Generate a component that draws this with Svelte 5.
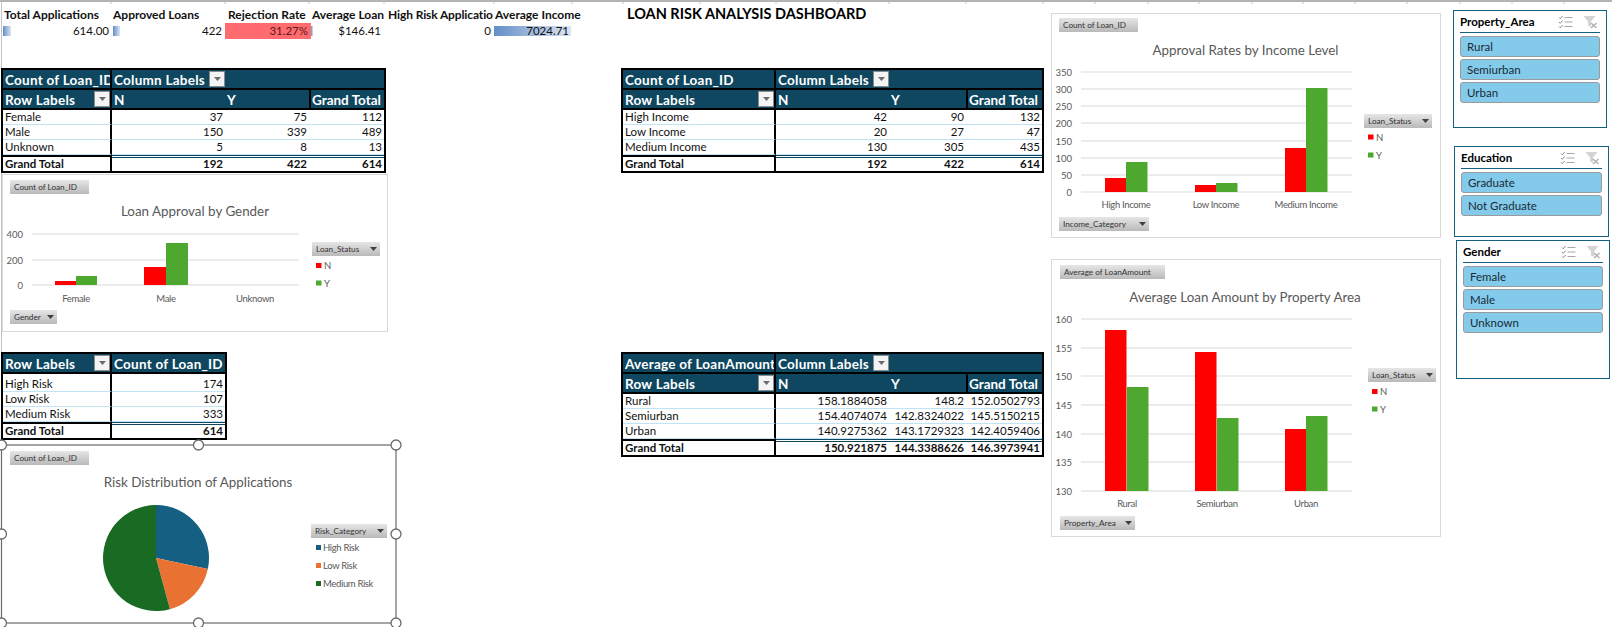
<script>
  const kpis = [
    { label: 'Total Applications', value: '614.00', bar: 8, off: 0 },
    { label: 'Approved Loans', value: '422', bar: 7, off: 1 },
    { label: 'Rejection Rate', value: '31.27%', bar: 0, off: 0, alert: true },
    { label: 'Average Loan', value: '$146.41', bar: 2, off: 0 },
    { label: 'High Risk Applicatio', value: '0', bar: 0, off: 0 },
    { label: 'Average Income', value: '7024.71', bar: 77, off: 0 }
  ];

  const genderPivot = {
    cls: 'pv-gender',
    corner: 'Count of Loan_ID',
    rows: [
      ['Female', '37', '75', '112'],
      ['Male', '150', '339', '489'],
      ['Unknown', '5', '8', '13']
    ],
    total: ['Grand Total', '192', '422', '614']
  };
  const incomePivot = {
    cls: 'pv-income',
    corner: 'Count of Loan_ID',
    rows: [
      ['High Income', '42', '90', '132'],
      ['Low Income', '20', '27', '47'],
      ['Medium Income', '130', '305', '435']
    ],
    total: ['Grand Total', '192', '422', '614']
  };
  const amountPivot = {
    cls: 'pv-amount',
    corner: 'Average of LoanAmount',
    rows: [
      ['Rural', '158.1884058', '148.2', '152.0502793'],
      ['Semiurban', '154.4074074', '142.8324022', '145.5150215'],
      ['Urban', '140.9275362', '143.1729323', '142.4059406']
    ],
    total: ['Grand Total', '150.921875', '144.3388626', '146.3973941']
  };
  const riskRows = [['High Risk', '174'], ['Low Risk', '107'], ['Medium Risk', '333']];

  const slicers = [
    { cls: 'sl-property', title: 'Property_Area', items: ['Rural', 'Semiurban', 'Urban'] },
    { cls: 'sl-education', title: 'Education', items: ['Graduate', 'Not Graduate'] },
    { cls: 'sl-gender', title: 'Gender', items: ['Female', 'Male', 'Unknown'] }
  ];

  const charts = [
    {
      cls: 'ch-gender', x: 2, y: 174, w: 386, h: 158,
      field: { x: 10, y: 180, w: 79, label: 'Count of Loan_ID' },
      axisField: { x: 10, y: 310, w: 47, label: 'Gender' },
      legendField: { x: 312, y: 242, w: 68, label: 'Loan_Status' },
      title: 'Loan Approval by Gender', titleX: 195, titleY: 211,
      gridX1: 32, gridX2: 299, tickX: 23,
      ticks: [['400', 234], ['200', 260], ['0', 285]],
      cats: [
        { label: 'Female', x: 76, n: [55, 281], y: [76, 276], w: 21 },
        { label: 'Male', x: 166, n: [144, 267], y: [166, 243], w: 22 },
        { label: 'Unknown', x: 255 }
      ],
      base: 285, labelY: 298,
      legendX: 316, legendYs: [265.5, 283]
    },
    {
      cls: 'ch-income', x: 1051, y: 13, w: 390, h: 225,
      field: { x: 1059, y: 18, w: 79, label: 'Count of Loan_ID' },
      axisField: { x: 1059, y: 217, w: 90, label: 'Income_Category' },
      legendField: { x: 1364, y: 114, w: 68, label: 'Loan_Status' },
      title: 'Approval Rates by Income Level', titleX: 1245.5, titleY: 50,
      gridX1: 1081, gridX2: 1352, tickX: 1072,
      ticks: [['350', 72], ['300', 89], ['250', 106], ['200', 123], ['150', 141], ['100', 158], ['50', 175], ['0', 192]],
      cats: [
        { label: 'High Income', x: 1126, n: [1105, 178], y: [1126, 162], w: 21.5 },
        { label: 'Low Income', x: 1216, n: [1195, 185], y: [1216, 183], w: 21.5 },
        { label: 'Medium Income', x: 1306, n: [1285, 148], y: [1306, 88], w: 21.5 }
      ],
      base: 192, labelY: 204,
      legendX: 1368, legendYs: [137, 155]
    },
    {
      cls: 'ch-amount', x: 1051, y: 259, w: 390, h: 278,
      field: { x: 1060, y: 265, w: 105, label: 'Average of LoanAmount' },
      axisField: { x: 1060, y: 516, w: 75, label: 'Property_Area' },
      legendField: { x: 1368, y: 368, w: 68, label: 'Loan_Status' },
      title: 'Average Loan Amount by Property Area', titleX: 1245, titleY: 297,
      gridX1: 1081, gridX2: 1352, tickX: 1072,
      ticks: [['160', 319], ['155', 348], ['150', 376], ['145', 405], ['140', 434], ['135', 462], ['130', 491]],
      cats: [
        { label: 'Rural', x: 1127, n: [1105, 330], y: [1127, 387], w: 21.5 },
        { label: 'Semiurban', x: 1217, n: [1195, 352], y: [1217, 418], w: 21.5 },
        { label: 'Urban', x: 1306, n: [1285, 429], y: [1306, 416], w: 21.5 }
      ],
      base: 491, labelY: 503,
      legendX: 1372, legendYs: [391.5, 409]
    }
  ];

  // pie slices, clockwise from 12 o'clock
  const pieData = [
    { label: 'High Risk', value: 174, color: '#156082' },
    { label: 'Low Risk', value: 107, color: '#e97132' },
    { label: 'Medium Risk', value: 333, color: '#196b24' }
  ];
  const pieTotal = 614;
  function slicePath(start, value) {
    const cx = 156, cy = 558, r = 53;
    const a0 = (start / pieTotal) * Math.PI * 2;
    const a1 = ((start + value) / pieTotal) * Math.PI * 2;
    const large = value / pieTotal > 0.5 ? 1 : 0;
    const p = (a) => `${(cx + r * Math.sin(a)).toFixed(2)} ${(cy - r * Math.cos(a)).toFixed(2)}`;
    return `M${cx} ${cy}L${p(a0)}A${r} ${r} 0 ${large} 1 ${p(a1)}Z`;
  }
  let acc = 0;
  const pieSlices = pieData.map((s) => {
    const d = slicePath(acc, s.value);
    acc += s.value;
    return { ...s, d };
  });
  const handles = [
    [1.5, 445], [198.5, 445], [396, 445],
    [1.5, 534], [396, 534],
    [1.5, 623], [198.5, 623], [396, 623]
  ];

  // column boundaries peeking out under the ribbon edge
  const colTicks = [111, 225, 309, 384, 494, 572, 623, 700, 776, 838, 889, 966, 1043, 1095, 1148, 1199, 1252, 1303, 1355, 1407, 1460, 1512, 1564];
</script>

{#snippet dropBtn()}
  <span class="drop"><svg width="7" height="4" viewBox="0 0 7 4"><path d="M0 0h7L3.5 4z" fill="#6b6b6b" /></svg></span>
{/snippet}

{#snippet fieldBtn(f, arrow)}
  <rect x={f.x} y={f.y} width={f.w} height="14" fill="url(#fieldGrad)" />
  <text class="field-text" x={f.x + 4} y={f.y + 10}>{f.label}</text>
  {#if arrow}
    <path d="M{f.x + f.w - 10} {f.y + 5}h7l-3.5 4z" fill="#404040" />
  {/if}
{/snippet}

{#snippet pivot(p)}
  <div class="pivot {p.cls}">
    <div class="cell hd corner">{p.corner}</div>
    <div class="cell hd collabels">Column Labels{@render dropBtn()}</div>
    <div class="sep"></div>
    <div class="cell hd corner rowlab">Row Labels{@render dropBtn()}</div>
    <div class="cell hd">N</div>
    <div class="cell hd">Y</div>
    <div class="cell hd gt">Grand Total</div>
    <div class="sep"></div>
    {#each p.rows as row}
      <div class="cell lab">{row[0]}</div>
      <div class="cell num">{row[1]}</div>
      <div class="cell num">{row[2]}</div>
      <div class="cell num">{row[3]}</div>
    {/each}
    <div class="total-rule"></div>
    <div class="total-double"></div>
    <div class="cell lab tot">{p.total[0]}</div>
    <div class="cell num tot">{p.total[1]}</div>
    <div class="cell num tot">{p.total[2]}</div>
    <div class="cell num tot">{p.total[3]}</div>
  </div>
{/snippet}

<div class="sheet">
  <svg class="defs" width="0" height="0">
    <defs>
      <linearGradient id="fieldGrad" x1="0" y1="0" x2="0" y2="1">
        <stop offset="0" stop-color="#e6e6e6" />
        <stop offset="1" stop-color="#b9b9b9" />
      </linearGradient>
    </defs>
  </svg>

  <svg class="col-ticks" width="1612" height="2">
    {#each colTicks as t}
      <line x1={t} x2={t} y1="0" y2="2" stroke="#c8c8c8" />
    {/each}
  </svg>

  <div class="kpis">
    {#each kpis as k}
      <div class="kpi-label">{k.label}</div>
    {/each}
    {#each kpis as k}
      <div
        class="kpi-value"
        class:alert={k.alert}
        style="--bar-w:{k.bar}px;--bar-x:{k.off}px"
      >{k.value}</div>
    {/each}
  </div>

  <h1 class="title">LOAN RISK ANALYSIS DASHBOARD</h1>

  {@render pivot(genderPivot)}
  {@render pivot(incomePivot)}
  {@render pivot(amountPivot)}

  <div class="pivot pv-risk">
    <div class="cell hd corner rowlab">Row Labels{@render dropBtn()}</div>
    <div class="cell hd">Count of Loan_ID</div>
    <div class="sep"></div>
    {#each riskRows as row, i}
      <div class="cell lab" class:first={i === 0}>{row[0]}</div>
      <div class="cell num" class:first={i === 0}>{row[1]}</div>
    {/each}
    <div class="total-rule"></div>
    <div class="total-double"></div>
    <div class="cell lab tot">Grand Total</div>
    <div class="cell num tot">614</div>
  </div>

  {#each charts as c}
    <div class="chart {c.cls}">
      <svg width={c.w} height={c.h} viewBox="{c.x} {c.y} {c.w} {c.h}">
        {@render fieldBtn(c.field, false)}
        <text class="chart-title" x={c.titleX} y={c.titleY + 5} text-anchor="middle">{c.title}</text>
        {#each c.ticks as t}
          <line x1={c.gridX1} x2={c.gridX2} y1={t[1]} y2={t[1]} stroke="#d9d9d9" />
          <text class="tick" x={c.tickX} y={t[1] + 3.5} text-anchor="end">{t[0]}</text>
        {/each}
        {#each c.cats as cat}
          {#if cat.n}
            <rect x={cat.n[0]} y={cat.n[1]} width={cat.w} height={c.base - cat.n[1]} fill="#ff0000" />
            <rect x={cat.y[0]} y={cat.y[1]} width={cat.w} height={c.base - cat.y[1]} fill="#4ea72e" />
          {/if}
          <text class="tick cat" x={cat.x} y={c.labelY + 3.5} text-anchor="middle">{cat.label}</text>
        {/each}
        {@render fieldBtn(c.axisField, true)}
        {@render fieldBtn(c.legendField, true)}
        <rect x={c.legendX} y={c.legendYs[0] - 2.5} width="5.5" height="5" fill="#ff0000" />
        <text class="tick" x={c.legendX + 8} y={c.legendYs[0] + 3.5}>N</text>
        <rect x={c.legendX} y={c.legendYs[1] - 2.5} width="5.5" height="5" fill="#4ea72e" />
        <text class="tick" x={c.legendX + 8} y={c.legendYs[1] + 3.5}>Y</text>
      </svg>
    </div>
  {/each}

  <div class="chart ch-risk">
    <svg width="410" height="197" viewBox="-6 430 410 197">
      <rect x="1.5" y="445" width="394.5" height="178" fill="#fff" stroke="#6a6a6a" stroke-width="1.2" />
      {@render fieldBtn({ x: 10, y: 451, w: 79, label: 'Count of Loan_ID' }, false)}
      <text class="chart-title" x="198" y="487" text-anchor="middle">Risk Distribution of Applications</text>
      {#each pieSlices as s}
        <path d={s.d} fill={s.color} />
      {/each}
      {@render fieldBtn({ x: 311, y: 524, w: 76, label: 'Risk_Category' }, true)}
      {#each pieSlices as s, i}
        <rect x="316" y={545 + i * 18} width="5" height="5" fill={s.color} />
        <text class="tick cat" x="323" y={551 + i * 18}>{s.label}</text>
      {/each}
      {#each handles as h}
        <circle cx={h[0]} cy={h[1]} r="5" fill="#fff" stroke="#6a6a6a" stroke-width="1.3" />
      {/each}
    </svg>
  </div>

  {#each slicers as s}
    <div class="slicer {s.cls}">
      <div class="slicer-head">
        <span class="slicer-title">{s.title}</span>
        <svg class="ico" width="15" height="14" viewBox="0 0 15 14" fill="none" stroke="#a6a6a6">
          <path d="M1 2.5l1.3 1.3L4.6 1M1 7l1.3 1.3L4.6 5.5M1 11.5l1.3 1.3L4.6 10" stroke="#8c8c8c" />
          <path d="M6.5 2.5h8M6.5 7h8M6.5 11.5h8" />
        </svg>
        <svg class="ico" width="15" height="14" viewBox="0 0 15 14">
          <path d="M0.5 1h12L8 6.5V12L5 10.5v-4z" fill="#d4d4d4" />
          <path d="M8 8l5.5 5M13.5 8L8 13" stroke="#b0b0b0" stroke-width="1.4" fill="none" />
        </svg>
      </div>
      <div class="slicer-items">
        {#each s.items as item}
          <div class="slicer-item">{item}</div>
        {/each}
      </div>
    </div>
  {/each}
</div>

<style>
  :global(body) {
    margin: 0;
    background: #fff;
  }

  .sheet {
    position: relative;
    width: 1612px;
    height: 627px;
    overflow: hidden;
    box-sizing: border-box;
    background: #fff;
    border-top: 2px solid #b4b4b4;
    font-family: Lato, "Liberation Sans", sans-serif;
    color: #111;
  }

  .sheet::before {
    content: '';
    position: absolute;
    left: 1px;
    top: 0;
    bottom: 0;
    width: 1px;
    background: #c4c4c4;
  }

  .defs {
    position: absolute;
  }

  .col-ticks {
    position: absolute;
    left: 0;
    top: 0;
  }

  /* KPI strip */
  .kpis {
    position: absolute;
    left: 3px;
    top: 5px;
    display: grid;
    grid-template-columns: 109px 113px 86px 73px 110px 78px;
    grid-template-rows: 16px 16px;
  }

  .kpi-label {
    font-size: 12px;
    font-weight: 700;
    line-height: 16px;
    white-space: nowrap;
    padding-left: 1px;
  }

  .kpi-label:nth-child(3) {
    padding-left: 3px;
  }

  .kpi-label:nth-child(5) {
    padding-left: 4px;
    letter-spacing: -0.12px;
  }

  .kpi-value {
    font-size: 11.5px;
    line-height: 16px;
    text-align: right;
    padding-right: 3px;
    background: linear-gradient(90deg, #638ec6, #dbe5f2) no-repeat var(--bar-x) 3px / var(--bar-w) 10px;
  }

  .kpi-value.alert {
    background: #ff6b6e;
    color: #5c1a1c;
  }

  .title {
    position: absolute;
    left: 627px;
    top: 4px;
    margin: 0;
    font-size: 14.5px;
    line-height: 16px;
    font-weight: 700;
    white-space: nowrap;
    color: #000;
  }

  /* pivot tables */
  .pivot {
    position: absolute;
    display: grid;
    box-sizing: border-box;
    border: 2px solid #000;
    font-size: 11.5px;
    background: #fff;
  }

  .pv-gender {
    left: 1px;
    top: 66px;
    width: 385px;
    grid-template-columns: 109px 113px 84px 75px;
  }

  .pv-income {
    left: 621px;
    top: 66px;
    width: 423px;
    grid-template-columns: 153px 113px 77px 76px;
  }

  .pv-amount {
    left: 621px;
    top: 350px;
    width: 423px;
    grid-template-columns: 153px 113px 77px 76px;
  }

  .pv-risk {
    left: 1px;
    top: 350px;
    width: 226px;
    grid-template-columns: 109px 113px;
  }

  .cell {
    height: 15px;
    line-height: 14px;
    white-space: nowrap;
    overflow: hidden;
    box-sizing: border-box;
  }

  .hd {
    position: relative;
    height: 18px;
    line-height: 20px;
    background: #0f4761;
    color: #fff;
    font-size: 13.5px;
    font-weight: 700;
    padding-left: 2px;
    letter-spacing: 0.25px;
  }

  .corner {
    border-right: 2px solid #000;
  }

  .collabels {
    grid-column: 2 / -1;
  }

  .gt {
    border-left: 2px solid #000;
    padding-left: 1px;
    letter-spacing: 0;
  }

  .sep {
    grid-column: 1 / -1;
    height: 2px;
    background: #000;
  }

  .lab {
    border-right: 2px solid #000;
    border-bottom: 1px solid #c0e4f5;
    padding-left: 2px;
  }

  .num {
    border-bottom: 1px solid #c0e4f5;
    text-align: right;
    padding-right: 2px;
  }

  .first {
    height: 18px;
    line-height: 19px;
  }

  .total-rule {
    height: 2px;
    background: #000;
  }

  .total-double {
    grid-column: 2 / -1;
    height: 3px;
    margin-bottom: -1px;
    box-sizing: border-box;
    border-top: 1px solid #0f4761;
    border-bottom: 1px solid #0f4761;
    position: relative;
    z-index: 1;
  }

  .tot {
    border-bottom: 0;
    font-weight: 700;
    height: 14px;
    line-height: 13px;
  }

  .drop {
    position: absolute;
    display: flex;
    align-items: center;
    justify-content: center;
    width: 16px;
    height: 16px;
    box-sizing: border-box;
    top: 1px;
    background: #f4f4f4;
    border: 1px solid #8a8a8a;
  }

  .collabels .drop {
    left: 97px;
  }

  .rowlab .drop {
    right: 0;
  }

  /* charts */
  .chart {
    position: absolute;
    box-sizing: border-box;
    background: #fff;
  }

  .chart svg {
    display: block;
    position: absolute;
    left: 0;
    top: 0;
  }

  .ch-gender,
  .ch-income,
  .ch-amount {
    outline: 1px solid #d9d9d9;
    outline-offset: -1px;
  }

  .ch-gender {
    left: 2px;
    top: 172px;
    width: 386px;
    height: 158px;
  }

  .ch-income {
    left: 1051px;
    top: 11px;
    width: 390px;
    height: 225px;
  }

  .ch-amount {
    left: 1051px;
    top: 257px;
    width: 390px;
    height: 278px;
  }

  .ch-risk {
    left: -6px;
    top: 428px;
    width: 410px;
    height: 197px;
    background: transparent;
  }

  .chart-title {
    font-size: 13.4px;
    fill: #595959;
  }

  .tick {
    font-size: 9.5px;
    fill: #595959;
  }

  .cat {
    letter-spacing: -0.35px;
  }

  .field-text {
    font-size: 8.2px;
    fill: #333;
  }

  /* slicers */
  .slicer {
    position: absolute;
    box-sizing: border-box;
    border: 1px solid #156082;
    background: #fff;
    padding: 0 6px;
  }

  .sl-property {
    left: 1453px;
    top: 8px;
    width: 154px;
    height: 118px;
  }

  .sl-education {
    left: 1454px;
    top: 144px;
    width: 155px;
    height: 91px;
  }

  .sl-gender {
    left: 1456px;
    top: 238px;
    width: 154px;
    height: 139px;
  }

  .slicer-head {
    display: flex;
    align-items: center;
    gap: 10px;
    height: 21px;
    padding-right: 2px;
    border-bottom: 1px solid #156082;
  }

  .slicer-title {
    flex: 1;
    font-size: 11.5px;
    font-weight: 700;
    color: #000;
  }

  .slicer-items {
    display: flex;
    flex-direction: column;
    gap: 2px;
    margin-top: 3px;
  }

  .slicer-item {
    height: 21px;
    line-height: 19px;
    box-sizing: border-box;
    background: #83caeb;
    border: 1px solid #9b9b9b;
    border-radius: 3px;
    padding-left: 6px;
    font-size: 11.5px;
    color: #1a2a35;
  }
</style>
